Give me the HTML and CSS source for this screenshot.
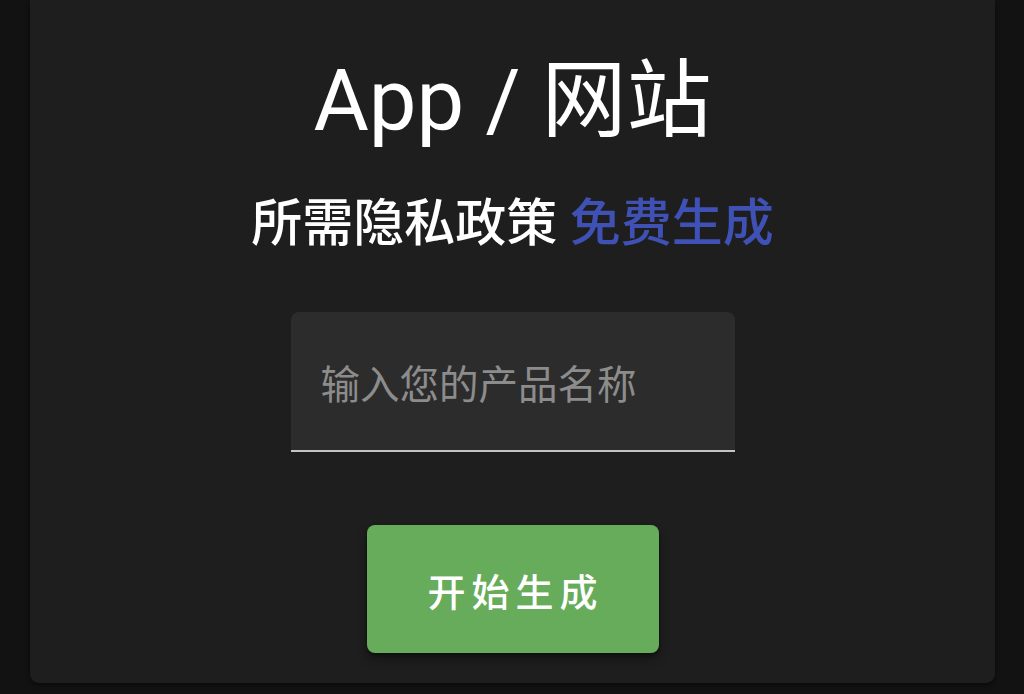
FILE: index.html
```html
<!DOCTYPE html>
<html lang="zh">
<head>
<meta charset="utf-8">
<title>隐私政策生成</title>
<link rel="stylesheet" href="styles.css">
</head>
<body>
<main class="card">
  <h1 class="title">App / 网站</h1>
  <p class="subtitle">所需隐私政策 <span class="accent">免费生成</span></p>
  <div class="field">
    <input class="field-input" type="text" placeholder="输入您的产品名称">
  </div>
  <button class="btn" type="button">开始生成</button>
</main>
</body>
</html>
```

FILE: styles.css
```css
* { box-sizing: border-box; }
html, body { margin: 0; height: 100%; }
body {
  background: #121212;
  padding: 0 29px 11px 30px;
  font-family: Roboto, "Noto Sans CJK SC", sans-serif;
  color: #ffffff;
  overflow: hidden;
}
.card {
  height: 683px;
  background: #1e1e1e;
  border-radius: 0 0 9px 9px;
  box-shadow: 0 2px 4px rgba(0,0,0,0.5);
  display: flex;
  flex-direction: column;
  align-items: center;
  padding-top: 51px;
}
.title {
  margin: 0;
  font-size: 85px;
  font-weight: 400;
  line-height: 100px;
  letter-spacing: 0;
}
.subtitle {
  margin: 41px 0 0;
  font-size: 51px;
  font-weight: 500;
  line-height: 64px;
}
.accent { color: #3f51b5; }
.field {
  margin-top: 56px;
  width: 444px;
  height: 140px;
  background: #2c2c2c;
  border-radius: 8px 8px 0 0;
  border-bottom: 2px solid #c4c4c4;
  display: flex;
  align-items: center;
  padding: 0 30px;
}
.field-input {
  width: 100%;
  background: transparent;
  border: 0;
  outline: none;
  font-family: "Noto Sans CJK SC", sans-serif;
  font-size: 39.5px;
  color: #ffffff;
  padding: 0;
}
.field-input::placeholder { color: #8c8c8c; opacity: 1; }
.btn {
  margin-top: 73px;
  width: 292px;
  height: 128px;
  background: #66ac5b;
  border: 0;
  border-radius: 8px;
  box-shadow: 0 6px 10px rgba(0,0,0,0.35), 0 2px 3px rgba(0,0,0,0.3);
  color: #ffffff;
  font-family: "Noto Sans CJK SC", sans-serif;
  font-size: 38px;
  font-weight: 500;
  letter-spacing: 6px;
  padding: 0 0 0 6px;
}
```
